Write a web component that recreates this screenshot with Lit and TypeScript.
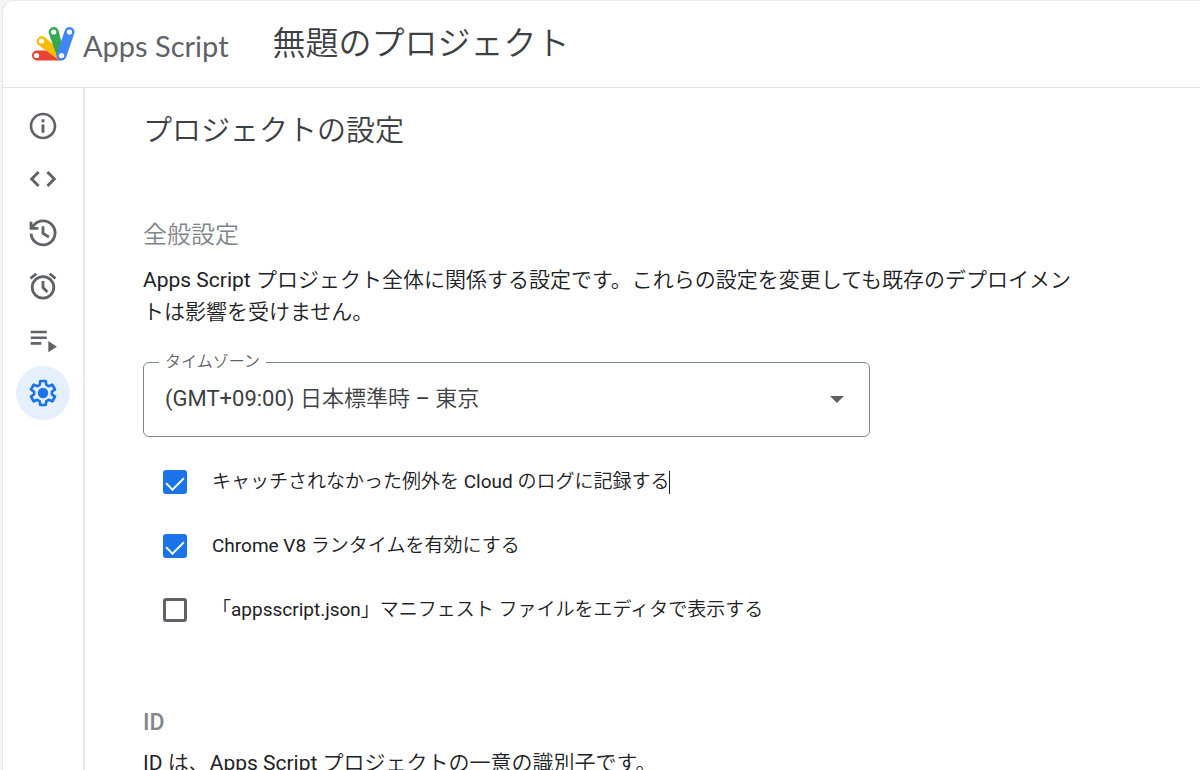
import { LitElement, html, css, svg } from "lit";
import { customElement, state } from "lit/decorators.js";

interface NavItem {
  id: string;
  label: string;
  icon: unknown;
}

const NAV: NavItem[] = [
  {
    id: "overview",
    label: "概要",
    icon: svg`<path d="M10.900 7h2.200v2.100h-2.200zm0 3.800h2.200v6.200h-2.200zM12 2C6.480 2 2 6.480 2 12s4.480 10 10 10 10-4.480 10-10S17.520 2 12 2zm0 18c-4.410 0-8-3.590-8-8s3.590-8 8-8 8 3.590 8 8-3.590 8-8 8z"/>`,
  },
  {
    id: "editor",
    label: "エディタ",
    icon: svg`<path fill="none" stroke="currentColor" stroke-width="2.200" d="M8.700 6.700 3.500 12l5.200 5.300M15.300 6.700 20.500 12l-5.200 5.300"/>`,
  },
  {
    id: "history",
    label: "プロジェクトの履歴",
    icon: svg`<path fill="none" stroke="currentColor" stroke-width="2.100" d="M3.050 12.500A9 9 0 1 0 5 6.300L3.600 8M3 3.500v5h5.500M12 7v5.300l4.400 2.700"/>`,
  },
  {
    id: "triggers",
    label: "トリガー",
    icon: svg`<path fill="none" stroke="currentColor" stroke-width="2.100" d="M12 8.300v4.900l3.300 3.300M2.600 6.400 7 2.800M21.400 6.400 17 2.800"/><circle cx="12" cy="13" r="8.100" fill="none" stroke="currentColor" stroke-width="2.100"/>`,
  },
  {
    id: "executions",
    label: "実行数",
    icon: svg`<path d="M2.800 5h12v2h-12zm0 4.300h12v2h-12zm0 4.200h8v2h-8zM16 12.800l6.400 4.200L16 21.200z"/>`,
  },
  {
    id: "settings",
    label: "プロジェクトの設定",
    icon: svg`<path fill="none" stroke="currentColor" stroke-width="2" stroke-linejoin="round" d="M10 3h4l.500 2.900 1.700 1 2.800-1.100 2 3.500-2.300 1.800v1.800L21 14.700l-2 3.500-2.800-1.100-1.700 1L14 21h-4l-.500-2.900-1.700-1L5 18.200l-2-3.500 2.300-1.800v-1.800L3 9.300l2-3.500 2.800 1.100 1.700-1z"/><circle cx="12" cy="12" r="3.900"/>`,
  },
];

@customElement("app-root")
export class AppRoot extends LitElement {
  static styles = css`
    :host {
      display: block;
      height: 100vh;
      overflow: hidden;
      background: #f3f5f6;
      color: #202124;
      font-family: Roboto, "Noto Sans CJK JP DemiLight", "Noto Sans CJK JP", sans-serif;
      font-size: 21px;
      line-height: 32px;
    }
    * {
      box-sizing: border-box;
    }
    .shell {
      display: flex;
      flex-direction: column;
      height: 100%;
      margin-left: 2px;
      border-top: 1px solid #e8eaed;
      border-left: 1px solid #e4e6e9;
      border-top-left-radius: 12px;
      background: #fff;
    }
    .header {
      display: flex;
      align-items: center;
      height: 87px;
      flex: none;
      padding: 0 28px 1px;
      border-bottom: 1px solid #dfe2e6;
    }
    .logo {
      width: 44px;
      height: 36px;
      flex: none;
    }
    .product {
      margin: 4px 0 0 8px;
      font-family: Lato, sans-serif;
      font-size: 29px;
      line-height: 36px;
      color: #5f6368;
      white-space: nowrap;
    }
    .project {
      margin: 0 0 0 44px;
      font-size: 33px;
      line-height: 48px;
      font-weight: 350;
      color: #3c4043;
      white-space: nowrap;
    }
    .body {
      display: flex;
      flex: 1;
      min-height: 0;
    }
    .nav {
      flex: none;
      width: 82px;
      padding-top: 11px;
      border-right: 2px solid #e8eaed;
    }
    .nav-list {
      display: grid;
      grid-template-rows: repeat(6, 1fr);
      place-items: center;
      height: 321px;
    }
    .nav-item {
      display: flex;
      align-items: center;
      justify-content: center;
      width: 54px;
      height: 54px;
      margin: -1px 0;
      padding: 0;
      border: 0;
      border-radius: 50%;
      background: none;
      color: #5f6368;
      cursor: pointer;
    }
    .nav-item[aria-current="page"] {
      background: #e6f0fd;
      color: #1a73e8;
    }
    .icon {
      width: 32px;
      height: 32px;
      fill: currentColor;
    }
    .content {
      flex: 1;
      min-width: 0;
      overflow: hidden;
      padding: 19px 58px 0;
    }
    .page-title {
      margin: 0;
      font-size: 29px;
      line-height: 48px;
      font-weight: 350;
      color: #3c4043;
    }
    .section {
      max-width: 945px;
      margin-top: 62px;
    }
    .section + .section {
      margin-top: 83px;
    }
    .section-title {
      margin: 0;
      font-size: 24px;
      line-height: 36px;
      font-weight: 350;
      color: #80868b;
    }
    .section-title.latin {
      font-weight: 500;
      font-size: 23px;
      line-height: 32px;
    }
    .text {
      margin: 11px 0 0;
    }
    .text.tight {
      margin-top: 8px;
    }
    .field {
      max-width: 727px;
      min-width: 0;
      margin: 24px 0 0;
      padding: 0 0 0 15px;
      border: 1px solid #80868b;
      border-radius: 6px;
    }
    .field-label {
      padding: 0 6px;
      font-size: 16px;
      line-height: 20px;
      font-weight: 350;
      color: #5f6368;
    }
    .select-wrap {
      display: grid;
      align-items: center;
    }
    .select {
      grid-area: 1 / 1;
      width: 100%;
      height: 64px;
      padding: 0 48px 10px 6px;
      border: 0;
      background: none;
      color: #3c4043;
      font: inherit;
      font-size: 22px;
      appearance: none;
      outline: none;
    }
    .arrow {
      grid-area: 1 / 1;
      justify-self: end;
      width: 14px;
      height: 7px;
      margin: 0 25px 10px 0;
      fill: #5f6368;
      pointer-events: none;
    }
    .options {
      display: flex;
      flex-direction: column;
      gap: 36px;
      margin-top: 31px;
      padding-left: 20px;
    }
    .option {
      display: flex;
      align-items: center;
      font-size: 19px;
      line-height: 28px;
    }
    .box {
      display: grid;
      flex: none;
      width: 24px;
      height: 24px;
      margin: 0 25px 0 0;
      border: 3px solid #5f6368;
      border-radius: 3px;
      appearance: none;
      background: #fff;
    }
    .box:checked {
      border-color: #1a73e8;
      background: #1a73e8;
    }
    .box:checked::after {
      content: "";
      place-self: center;
      width: 8px;
      height: 15px;
      margin-bottom: 4px;
      border: solid #fff;
      border-width: 0 2px 2px 0;
      rotate: 45deg;
    }
    .caret {
      width: 1px;
      height: 23px;
      background: #202124;
    }
  `;

  @state() private current = "settings";

  private options = [
    { id: "log", label: "キャッチされなかった例外を Cloud のログに記録する", checked: true, caret: true },
    { id: "v8", label: "Chrome V8 ランタイムを有効にする", checked: true, caret: false },
    { id: "manifest", label: "「appsscript.json」マニフェスト ファイルをエディタで表示する", checked: false, caret: false },
  ];

  render() {
    return html`
      <div class="shell">
        <header class="header">
          <svg class="logo" viewBox="0 0 44 36" aria-hidden="true">
            <path fill="#ea4335" d="M6 24.500H30V34.500H6A5 5 0 0 1 6 24.500z" />
            <path fill="#fbbc04" d="M13.600 11.100 29 24 27 33.500 7.400 18.900A5 5 0 0 1 13.600 11.100z" />
            <path fill="#34a853" d="M27.500 4.500 31 18 27 33 17.900 7.500A5 5 0 0 1 27.500 4.500z" />
            <path fill="none" stroke="#4285f4" stroke-width="10" stroke-linecap="round" d="M38.500 6 30.500 29.500" />
            <g fill="#fff">
              <circle cx="5.500" cy="29.500" r="2.600" />
              <circle cx="10.500" cy="15" r="2.600" />
              <circle cx="22.700" cy="6" r="2.600" />
              <circle cx="38.500" cy="6" r="2.600" />
              <circle cx="30.500" cy="29.500" r="2.600" />
            </g>
          </svg>
          <span class="product">Apps Script</span>
          <h1 class="project">無題のプロジェクト</h1>
        </header>
        <div class="body">
          <nav class="nav">
            <div class="nav-list">
              ${NAV.map(
                (item) => html`
                  <button
                    class="nav-item"
                    type="button"
                    aria-label=${item.label}
                    aria-current=${item.id === this.current ? "page" : "false"}
                    @click=${() => (this.current = item.id)}
                  >
                    <svg class="icon" viewBox="0 0 24 24" aria-hidden="true">${item.icon}</svg>
                  </button>
                `
              )}
            </div>
          </nav>
          <main class="content">
            <h2 class="page-title">プロジェクトの設定</h2>
            <section class="section">
              <h3 class="section-title">全般設定</h3>
              <p class="text">
                Apps Script プロジェクト全体に関係する設定です。これらの設定を変更しても既存のデプロイメントは影響を受けません。
              </p>
              <fieldset class="field">
                <legend class="field-label"><label for="timezone">タイムゾーン</label></legend>
                <div class="select-wrap">
                  <select class="select" id="timezone">
                    <option>(GMT+09:00) 日本標準時 – 東京</option>
                  </select>
                  <svg class="arrow" viewBox="0 0 14 7" aria-hidden="true"><path d="M0 0h14L7 7z" /></svg>
                </div>
              </fieldset>
              <div class="options">
                ${this.options.map(
                  (o) => html`
                    <div class="option">
                      <input class="box" type="checkbox" id=${o.id} .checked=${o.checked} />
                      <label for=${o.id}>${o.label}</label>
                      ${o.caret ? html`<span class="caret"></span>` : null}
                    </div>
                  `
                )}
              </div>
            </section>
            <section class="section">
              <h3 class="section-title latin">ID</h3>
              <p class="text tight">ID は、Apps Script プロジェクトの一意の識別子です。</p>
            </section>
          </main>
        </div>
      </div>
    `;
  }
}
